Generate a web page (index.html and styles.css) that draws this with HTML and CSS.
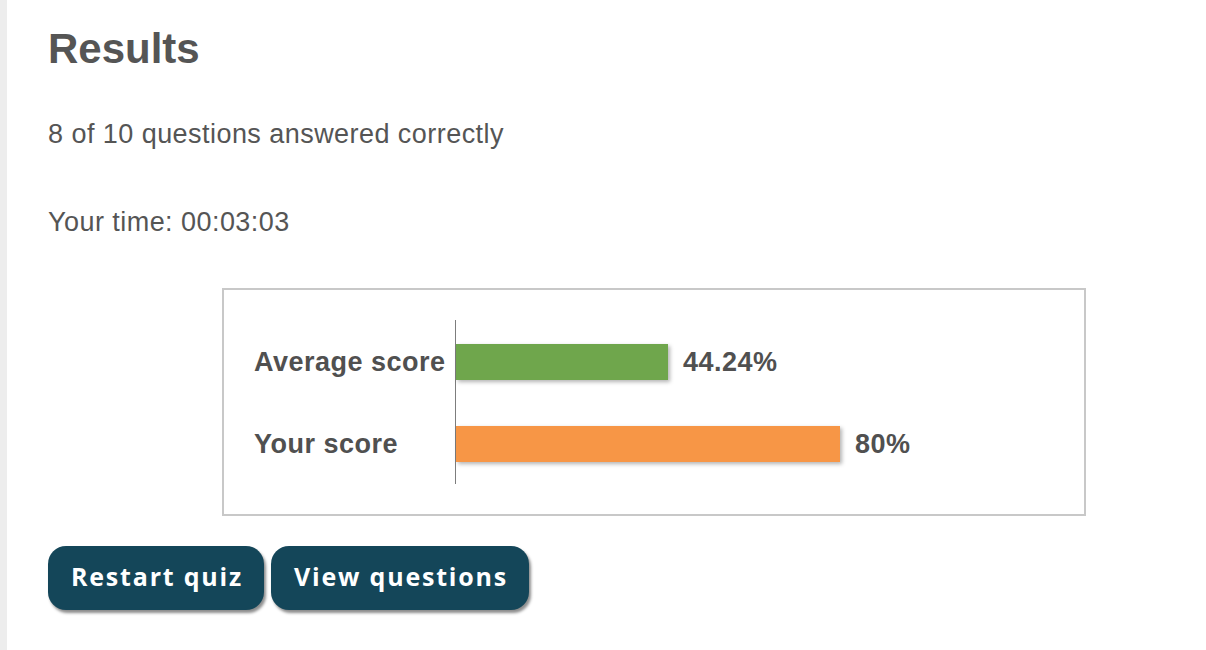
FILE: index.html
```html
<!DOCTYPE html>
<html lang="en">
<head>
  <meta charset="UTF-8">
  <meta name="viewport" content="width=device-width, initial-scale=1.0">
  <title>Quiz Results</title>
  <link rel="stylesheet" href="styles.css">
</head>
<body>
    <div class="results">
        <h1>Results</h1>
        <p class="summary">8 of 10 questions answered correctly</p>
        <p class="time">Your time: 00:03:03</p>

        <div class="chart">
            <div class="chart-labels">
                <div class="chart-label">Average score</div>
                <div class="chart-label">Your score</div>
            </div>
            <div class="chart-bars">
                <div class="chart-row">
                    <div class="bar bar-average" style="width: 212px"></div>
                    <span class="bar-value">44.24%</span>
                </div>
                <div class="chart-row">
                    <div class="bar bar-user" style="width: 384px"></div>
                    <span class="bar-value">80%</span>
                </div>
            </div>
        </div>

        <div class="actions">
            <button id="restart-quiz">Restart quiz</button>
            <button id="view-questions">View questions</button>
        </div>
    </div>
</body>
</html>
```

FILE: styles.css
```css
body {
  font-family: 'Liberation Sans', Arial, sans-serif;
  background: #fff;
  color: #555;
  margin: 0;
  padding: 0;
  border-left: 7px solid #ededed;
  min-height: 100vh;
  box-sizing: border-box;
}
.results {
  padding: 28px 0 0 41px;
}
h1 {
  font-size: 42px;
  line-height: 1;
  font-weight: bold;
  margin: 0;
  color: #555;
}
.summary,
.time {
  font-size: 27px;
  line-height: 1;
  letter-spacing: 0.45px;
  margin: 0;
}
.summary {
  margin-top: 51px;
}
.time {
  margin-top: 61px;
}
.chart {
  display: flex;
  width: 864px;
  box-sizing: border-box;
  margin: 52px 0 0 174px;
  padding: 30px;
  border: 2px solid #c8c8c8;
}
.chart-labels,
.chart-bars {
  display: flex;
  flex-direction: column;
  gap: 46px;
  padding: 24px 0 22px;
}
.chart-labels {
  width: 201px;
}
.chart-label {
  height: 36px;
  line-height: 36px;
  font-size: 27px;
  font-weight: bold;
  letter-spacing: 0.5px;
  color: #505050;
  white-space: nowrap;
}
.chart-bars {
  flex: 1;
  border-left: 1px solid #7d7d7d;
}
.chart-row {
  display: flex;
  align-items: center;
  gap: 15px;
  height: 36px;
}
.bar {
  height: 36px;
  box-shadow: 2px 2px 4px rgba(0, 0, 0, 0.3);
}
.bar-average {
  background: #6fa64c;
}
.bar-user {
  background: #f79646;
}
.bar-value {
  font-size: 27px;
  font-weight: bold;
  letter-spacing: 0.5px;
  color: #505050;
}
.actions {
  display: flex;
  gap: 7px;
  margin-top: 30px;
}
button {
  font-family: 'Open Sans', Roboto, sans-serif;
  font-size: 25px;
  font-weight: bold;
  letter-spacing: 1.8px;
  line-height: 60px;
  height: 64px;
  padding: 0 21px 4px 23px;
  border: none;
  border-radius: 18px;
  background-color: #144659;
  color: #fff;
  box-shadow: 2px 3px 3px rgba(0, 0, 0, 0.45);
  cursor: pointer;
}
```
